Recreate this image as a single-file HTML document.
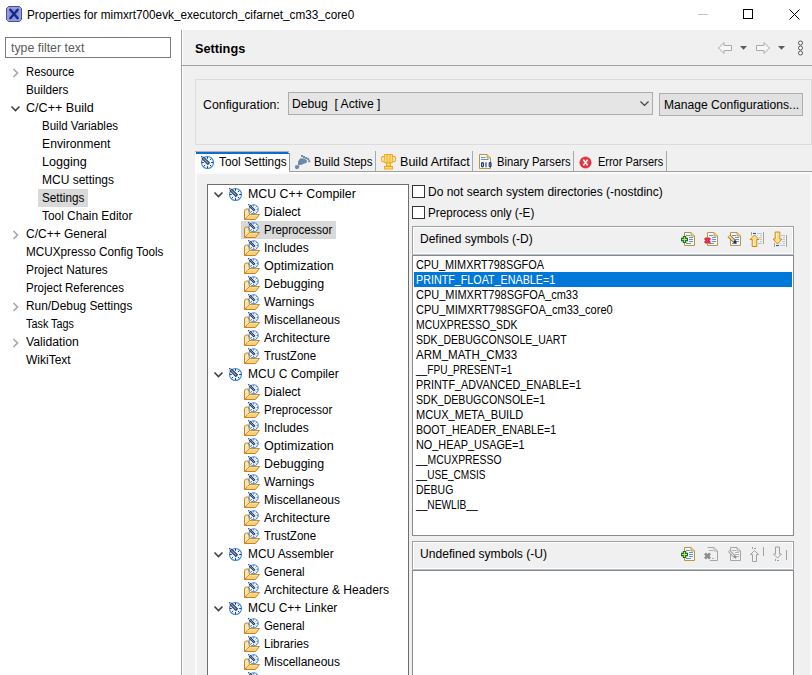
<!DOCTYPE html>
<html><head><meta charset="utf-8"><title>Properties</title>
<style>
html,body{margin:0;padding:0;}
body{width:812px;height:675px;position:relative;overflow:hidden;background:#fff;font-family:"Liberation Sans",sans-serif;}
.t{position:absolute;white-space:pre;transform-origin:0 0;}
.u{position:relative;top:-1px}
svg{overflow:visible}
</style></head><body>
<svg style="position:absolute;left:6px;top:6px" width="16" height="16" viewBox="0 0 16 16"><path d="M2.5 0.5 H13.5 L15.5 2.5 V13.5 L13.5 15.5 H2.5 L0.5 13.5 V2.5 Z" fill="#8a90d2" stroke="#3f52aa" stroke-width="1"/><rect x="2" y="2" width="12" height="12" fill="none" stroke="#a6a8e0" stroke-width="1"/><path d="M4.3 3.8 L11.7 12.2 M11.7 3.8 L4.3 12.2" stroke="#13288a" stroke-width="2.4" stroke-linecap="round"/></svg>
<div class="t" style="left:27.02px;top:9px;color:#000;font-size:12px;line-height:12px;font-weight:normal;transform:scaleX(0.9789);">Properties for mimxrt700evk<span class=u>_</span>executorch<span class=u>_</span>cifarnet<span class=u>_</span>cm33<span class=u>_</span>core0</div>
<div style="position:absolute;left:698px;top:14px;width:10px;height:1px;background:#c4c4c4"></div>
<div style="position:absolute;left:743px;top:9px;width:10px;height:10px;border:1px solid #000;box-sizing:border-box"></div>
<svg style="position:absolute;left:789px;top:9px" width="11" height="11" viewBox="0 0 11 11"><path d="M0.5 0.5 L10.5 10.5 M10.5 0.5 L0.5 10.5" stroke="#000" stroke-width="1"/></svg>
<div style="position:absolute;left:5px;top:37px;width:166px;height:21px;border:1px solid #7a7a7a;box-sizing:border-box;background:#fff"></div>
<div class="t" style="left:10.97px;top:42px;color:#5c5c5c;font-size:12px;line-height:12px;font-weight:normal;transform:scaleX(1.0290);">type filter text</div>
<svg style="position:absolute;left:12px;top:68px" width="8" height="10" viewBox="0 0 8 10"><path d="M1.5 1 L5.5 5 L1.5 9" fill="none" stroke="#a6a6a6" stroke-width="1.6"/></svg>
<div class="t" style="left:26.06px;top:66px;color:#000;font-size:12px;line-height:12px;font-weight:normal;transform:scaleX(0.9388);">Resource</div>
<div class="t" style="left:26.02px;top:84px;color:#000;font-size:12px;line-height:12px;font-weight:normal;transform:scaleX(0.9756);">Builders</div>
<svg style="position:absolute;left:10px;top:105px" width="11" height="8" viewBox="0 0 11 8"><path d="M1.5 1.5 L5.5 5.5 L9.5 1.5" fill="none" stroke="#404040" stroke-width="1.6"/></svg>
<div class="t" style="left:25.95px;top:102px;color:#000;font-size:12px;line-height:12px;font-weight:normal;transform:scaleX(1.0484);">C/C++ Build</div>
<div class="t" style="left:42.04px;top:120px;color:#000;font-size:12px;line-height:12px;font-weight:normal;transform:scaleX(0.9610);">Build Variables</div>
<div class="t" style="left:41.98px;top:138px;color:#000;font-size:12px;line-height:12px;font-weight:normal;transform:scaleX(1.0154);">Environment</div>
<div class="t" style="left:41.95px;top:156px;color:#000;font-size:12px;line-height:12px;font-weight:normal;transform:scaleX(1.0500);">Logging</div>
<div class="t" style="left:42.00px;top:174px;color:#000;font-size:12px;line-height:12px;font-weight:normal;">MCU settings</div>
<div style="position:absolute;left:38px;top:189px;width:50px;height:18px;background:#d9d9d9"></div>
<div class="t" style="left:42.02px;top:192px;color:#000;font-size:12px;line-height:12px;font-weight:normal;transform:scaleX(0.9756);">Settings</div>
<div class="t" style="left:42.00px;top:210px;color:#000;font-size:12px;line-height:12px;font-weight:normal;transform:scaleX(0.9889);">Tool Chain Editor</div>
<svg style="position:absolute;left:12px;top:230px" width="8" height="10" viewBox="0 0 8 10"><path d="M1.5 1 L5.5 5 L1.5 9" fill="none" stroke="#a6a6a6" stroke-width="1.6"/></svg>
<div class="t" style="left:26.00px;top:228px;color:#000;font-size:12px;line-height:12px;font-weight:normal;">C/C++ General</div>
<div class="t" style="left:26.02px;top:246px;color:#000;font-size:12px;line-height:12px;font-weight:normal;transform:scaleX(0.9783);">MCUXpresso Config Tools</div>
<div class="t" style="left:26.01px;top:264px;color:#000;font-size:12px;line-height:12px;font-weight:normal;transform:scaleX(0.9875);">Project Natures</div>
<div class="t" style="left:26.04px;top:282px;color:#000;font-size:12px;line-height:12px;font-weight:normal;transform:scaleX(0.9596);">Project References</div>
<svg style="position:absolute;left:12px;top:302px" width="8" height="10" viewBox="0 0 8 10"><path d="M1.5 1 L5.5 5 L1.5 9" fill="none" stroke="#a6a6a6" stroke-width="1.6"/></svg>
<div class="t" style="left:26.01px;top:300px;color:#000;font-size:12px;line-height:12px;font-weight:normal;transform:scaleX(0.9905);">Run/Debug Settings</div>
<div class="t" style="left:26.00px;top:318px;color:#000;font-size:12px;line-height:12px;font-weight:normal;transform:scaleX(0.9038);">Task Tags</div>
<svg style="position:absolute;left:12px;top:338px" width="8" height="10" viewBox="0 0 8 10"><path d="M1.5 1 L5.5 5 L1.5 9" fill="none" stroke="#a6a6a6" stroke-width="1.6"/></svg>
<div class="t" style="left:26.00px;top:336px;color:#000;font-size:12px;line-height:12px;font-weight:normal;transform:scaleX(1.0200);">Validation</div>
<div class="t" style="left:26.00px;top:354px;color:#000;font-size:12px;line-height:12px;font-weight:normal;">WikiText</div>
<div style="position:absolute;left:181px;top:30px;width:1px;height:645px;background:#a0a0a0"></div>
<div style="position:absolute;left:183px;top:30px;width:629px;height:645px;background:#f0f0f0"></div>
<div class="t" style="left:195.02px;top:42px;color:#000;font-size:13px;line-height:13px;font-weight:bold;transform:scaleX(0.9796);">Settings</div>
<svg style="position:absolute;left:718px;top:42px" width="15" height="13" viewBox="0 0 15 13"><path d="M0.5 6 L6 0.5 V3.5 H13.5 V8.5 H6 V11.5 Z" fill="#f6f6f6" stroke="#aaaaaa" stroke-width="1" stroke-linejoin="round"/></svg>
<svg style="position:absolute;left:740px;top:46px" width="8" height="5" viewBox="0 0 8 5"><path d="M0 0 H7 L3.5 3.8 Z" fill="#5a5a5a"/></svg>
<svg style="position:absolute;left:756px;top:42px" width="15" height="13" viewBox="0 0 15 13"><g transform="translate(14,0) scale(-1,1)"><path d="M0.5 6 L6 0.5 V3.5 H13.5 V8.5 H6 V11.5 Z" fill="#f6f6f6" stroke="#aaaaaa" stroke-width="1" stroke-linejoin="round"/></g></svg>
<svg style="position:absolute;left:778px;top:46px" width="8" height="5" viewBox="0 0 8 5"><path d="M0 0 H7 L3.5 3.8 Z" fill="#5a5a5a"/></svg>
<svg style="position:absolute;left:797px;top:40px" width="7" height="16" viewBox="0 0 7 16"><circle cx="3.5" cy="3" r="2" fill="#fff" stroke="#555"/><circle cx="3.5" cy="8" r="2" fill="#fff" stroke="#555"/><circle cx="3.5" cy="13" r="2" fill="#fff" stroke="#555"/></svg>
<div style="position:absolute;left:182px;top:65px;width:630px;height:1px;background:#a0a0a0"></div>
<div style="position:absolute;left:195px;top:79px;width:617px;height:66px;border:1px solid #dcdcdc;box-sizing:border-box"></div>
<div class="t" style="left:202.97px;top:99px;color:#000;font-size:12px;line-height:12px;font-weight:normal;transform:scaleX(1.0278);">Configuration:</div>
<div style="position:absolute;left:288px;top:92px;width:365px;height:23px;border:1px solid #adadad;box-sizing:border-box;background:#e5e5e5"></div>
<div class="t" style="left:291.99px;top:98px;color:#000;font-size:12px;line-height:12px;font-weight:normal;transform:scaleX(1.0119);">Debug  [ Active ]</div>
<svg style="position:absolute;left:640px;top:101px" width="9" height="6" viewBox="0 0 9 6"><path d="M0.5 0.5 L4.5 4.5 L8.5 0.5" fill="none" stroke="#404040" stroke-width="1.2"/></svg>
<div style="position:absolute;left:659px;top:93px;width:144px;height:23px;border:1px solid #adadad;box-sizing:border-box;background:#e1e1e1"></div>
<div class="t" style="left:663.99px;top:99px;color:#000;font-size:12px;line-height:12px;font-weight:normal;transform:scaleX(1.0076);">Manage Configurations...</div>
<div style="position:absolute;left:289px;top:171px;width:523px;height:1px;background:#a0a0a0"></div>
<div style="position:absolute;left:195px;top:172px;width:617px;height:2px;background:#fbfbfb"></div>
<div style="position:absolute;left:195px;top:151px;width:2px;height:524px;background:#fbfbfb"></div>
<div style="position:absolute;left:810px;top:172px;width:2px;height:503px;background:#fbfbfb"></div>
<div style="position:absolute;left:195px;top:151px;width:94px;height:21px;background:#fff;border-top:1px solid #b8b0a8;box-sizing:border-box"></div>
<div style="position:absolute;left:289px;top:153px;width:1px;height:19px;background:#9a9a9a"></div>
<div style="position:absolute;left:288px;top:152px;width:1px;height:1px;background:#c8c8c8"></div>
<div style="position:absolute;left:196px;top:152px;width:92px;height:2px;background:#0a6ed0"></div>
<div style="position:absolute;left:288px;top:153px;width:1px;height:1px;background:#0a6ed0"></div>
<div style="position:absolute;left:375px;top:151px;width:1px;height:20px;background:#a8a8a8"></div>
<div style="position:absolute;left:472px;top:151px;width:1px;height:20px;background:#a8a8a8"></div>
<div style="position:absolute;left:573px;top:151px;width:1px;height:20px;background:#a8a8a8"></div>
<div style="position:absolute;left:666px;top:151px;width:1px;height:20px;background:#a8a8a8"></div>
<div class="t" style="left:219.00px;top:156px;color:#000;font-size:12px;line-height:12px;font-weight:normal;transform:scaleX(0.9851);">Tool Settings</div>
<div class="t" style="left:314.03px;top:156px;color:#000;font-size:12px;line-height:12px;font-weight:normal;transform:scaleX(0.9655);">Build Steps</div>
<div class="t" style="left:399.95px;top:156px;color:#000;font-size:12px;line-height:12px;font-weight:normal;transform:scaleX(1.0469);">Build Artifact</div>
<div class="t" style="left:497.07px;top:156px;color:#000;font-size:12px;line-height:12px;font-weight:normal;transform:scaleX(0.9342);">Binary Parsers</div>
<div class="t" style="left:598.09px;top:156px;color:#000;font-size:12px;line-height:12px;font-weight:normal;transform:scaleX(0.9130);">Error Parsers</div>
<svg style="position:absolute;left:201px;top:156px" width="13" height="13" viewBox="0 0 13 13"><circle cx="6.5" cy="6.5" r="6" fill="#f2f7fd" stroke="#3f8ad4" stroke-width="1.1"/><path d="M6.5 0.8 V2.8 M12.2 6.5 H10.2 M6.5 12.2 V10.2 M0.8 6.5 H2.8 M2.7800000000000002 10.219999999999999 l1.3 -1.3 M10.219999999999999 10.219999999999999 l-1.3 -1.3 M10.219999999999999 2.7800000000000002 l-1.3 1.3" stroke="#1d3d82" stroke-width="1"/><path d="M1.6 1.6 L8 8" stroke="#1d3d82" stroke-width="3.3"/><path d="M2.5 2.5 L7.2 7.2" stroke="#f7e58c" stroke-width="1.1" stroke-dasharray="0.8 0.6"/><circle cx="0.8" cy="0.8" r="0.8" fill="#1d2a5a"/></svg>
<svg style="position:absolute;left:292px;top:153px" width="20" height="20" viewBox="0 0 20 20"><g fill="#6b8aa6"><path d="M3.2 12.6 L6.2 12 L7.2 13.2 L6.8 15.6 L4.2 16.2 L3 14.8 Z"/><path d="M8.3 5.3 L12.4 5.5 L14.8 7.2 L14.8 9.8 L11.9 10.8 L8.9 11.9 L6 11.9 L6 8.5 Z"/><rect x="9" y="2" width="2" height="2"/><rect x="11" y="3" width="2" height="2"/><rect x="13.2" y="4" width="2" height="2"/><rect x="15.2" y="5" width="2" height="2"/><rect x="16.2" y="7.2" width="2" height="2"/></g></svg>
<svg style="position:absolute;left:379px;top:153px" width="20" height="20" viewBox="0 0 20 20"><path d="M5.5 1.5 H13.5 L14 9 Q13 9.8 12 9.8 H7 Q6 9.8 5 9 Z" fill="#f9dc78" stroke="#f0a81e" stroke-width="1"/><path d="M5.2 3.5 H3.5 L2.5 4.5 V7.5 L3.5 8.8 H5.3 M13.8 3.5 H15.5 L16.5 4.5 V7.5 L15.5 8.8 H13.7" fill="none" stroke="#f0a81e" stroke-width="1.1"/><path d="M8 2 V9.5 M11 2 V9.5" stroke="#f0a81e" stroke-width="0.9"/><rect x="7.5" y="10" width="4" height="3" fill="#f9dc78" stroke="#f0a81e" stroke-width="1"/><rect x="5.5" y="13.5" width="8" height="2.5" fill="#f9dc78" stroke="#f0a81e" stroke-width="1"/></svg>
<svg style="position:absolute;left:475px;top:153px" width="20" height="20" viewBox="0 0 20 20"><path d="M4.5 1.5 H12 L15.5 5 V15.5 H4.5 Z" fill="#f4f8fe" stroke="#b8983a" stroke-width="1"/><path d="M12 1.5 V5 H15.5" fill="#e8c868" stroke="#b8983a" stroke-width="0.8"/><path d="M6 4.5 H10.5 M6 6.5 H13.5" stroke="#5f82bf" stroke-width="0.9"/><g fill="none" stroke="#17316e" stroke-width="1.1"><rect x="6.6" y="9.6" width="1.8" height="4.3" rx="0.9"/><path d="M11 9.2 V14.2"/><rect x="14.2" y="9.6" width="1.8" height="4.3" rx="0.9"/></g></svg>
<svg style="position:absolute;left:577px;top:153px" width="20" height="20" viewBox="0 0 20 20"><circle cx="8.5" cy="9.5" r="5.6" fill="#e4303c" stroke="#d01a28" stroke-width="0.6"/><circle cx="8.5" cy="9.5" r="3.5" fill="#ec5a64" opacity="0.5"/><path d="M6.3 6.6 L10.7 12.4 M10.7 6.6 L6.3 12.4" stroke="#fff" stroke-width="1.5"/></svg>
<div style="position:absolute;left:207px;top:184px;width:202px;height:491px;border:1px solid #6e6e6e;border-bottom:none;box-sizing:border-box;background:#fff"></div>
<svg style="position:absolute;left:213px;top:191px" width="11" height="8" viewBox="0 0 11 8"><path d="M1.5 1.5 L5.5 5.5 L9.5 1.5" fill="none" stroke="#404040" stroke-width="1.6"/></svg>
<svg style="position:absolute;left:229px;top:188px" width="13" height="13" viewBox="0 0 13 13"><circle cx="6.5" cy="6.5" r="6" fill="#f2f7fd" stroke="#3f8ad4" stroke-width="1.1"/><path d="M6.5 0.8 V2.8 M12.2 6.5 H10.2 M6.5 12.2 V10.2 M0.8 6.5 H2.8 M2.7800000000000002 10.219999999999999 l1.3 -1.3 M10.219999999999999 10.219999999999999 l-1.3 -1.3 M10.219999999999999 2.7800000000000002 l-1.3 1.3" stroke="#1d3d82" stroke-width="1"/><path d="M1.6 1.6 L8 8" stroke="#1d3d82" stroke-width="3.3"/><path d="M2.5 2.5 L7.2 7.2" stroke="#f7e58c" stroke-width="1.1" stroke-dasharray="0.8 0.6"/><circle cx="0.8" cy="0.8" r="0.8" fill="#1d2a5a"/></svg>
<div class="t" style="left:247.97px;top:188px;color:#000;font-size:12px;line-height:12px;font-weight:normal;transform:scaleX(1.0294);">MCU C++ Compiler</div>
<svg style="position:absolute;left:241px;top:202px" width="20" height="20" viewBox="0 0 20 20"><path d="M3.5 17.5 V9 Q3.5 7 5.5 7 H7.5 L8.5 12.5 L4 17.5 Z" fill="#fae6b4" stroke="#c9831f" stroke-width="1"/><path d="M8.5 12.5 H18.5 L14.5 17.5 H3.8 Z" fill="#f6d07a" stroke="#c9831f" stroke-width="1" stroke-linejoin="round"/><path d="M6 15.6 L9 13.3 L16.8 13.3" stroke="#fbe6b0" stroke-width="0.8" fill="none"/><circle cx="12.7" cy="7.3" r="4.6" fill="#fbfdff" stroke="#3f8ad4" stroke-width="1"/><path d="M12.7 3.2 V4.4 M16.8 7.3 H15.6 M12.7 11.4 V10.2 M9.9 10.1 l0.8 -0.8 M15.5 10.1 l-0.8 -0.8 M15.5 4.5 l-0.8 0.8" stroke="#1d3d82" stroke-width="0.9"/><path d="M8.6 3.6 L13.6 8.6" stroke="#1d3d82" stroke-width="2.4"/><path d="M9.2 4.2 L13 8" stroke="#f7e58c" stroke-width="0.9" stroke-dasharray="0.8 0.6"/><circle cx="7.8" cy="2.8" r="0.7" fill="#1d2a5a"/></svg>
<div class="t" style="left:264.00px;top:206px;color:#000;font-size:12px;line-height:12px;font-weight:normal;">Dialect</div>
<div style="position:absolute;left:241px;top:221px;width:95px;height:18px;background:#d9d9d9"></div>
<svg style="position:absolute;left:241px;top:220px" width="20" height="20" viewBox="0 0 20 20"><path d="M3.5 17.5 V9 Q3.5 7 5.5 7 H7.5 L8.5 12.5 L4 17.5 Z" fill="#fae6b4" stroke="#c9831f" stroke-width="1"/><path d="M8.5 12.5 H18.5 L14.5 17.5 H3.8 Z" fill="#f6d07a" stroke="#c9831f" stroke-width="1" stroke-linejoin="round"/><path d="M6 15.6 L9 13.3 L16.8 13.3" stroke="#fbe6b0" stroke-width="0.8" fill="none"/><circle cx="12.7" cy="7.3" r="4.6" fill="#fbfdff" stroke="#3f8ad4" stroke-width="1"/><path d="M12.7 3.2 V4.4 M16.8 7.3 H15.6 M12.7 11.4 V10.2 M9.9 10.1 l0.8 -0.8 M15.5 10.1 l-0.8 -0.8 M15.5 4.5 l-0.8 0.8" stroke="#1d3d82" stroke-width="0.9"/><path d="M8.6 3.6 L13.6 8.6" stroke="#1d3d82" stroke-width="2.4"/><path d="M9.2 4.2 L13 8" stroke="#f7e58c" stroke-width="0.9" stroke-dasharray="0.8 0.6"/><circle cx="7.8" cy="2.8" r="0.7" fill="#1d2a5a"/></svg>
<div class="t" style="left:264.04px;top:224px;color:#000;font-size:12px;line-height:12px;font-weight:normal;transform:scaleX(0.9565);">Preprocessor</div>
<svg style="position:absolute;left:241px;top:238px" width="20" height="20" viewBox="0 0 20 20"><path d="M3.5 17.5 V9 Q3.5 7 5.5 7 H7.5 L8.5 12.5 L4 17.5 Z" fill="#fae6b4" stroke="#c9831f" stroke-width="1"/><path d="M8.5 12.5 H18.5 L14.5 17.5 H3.8 Z" fill="#f6d07a" stroke="#c9831f" stroke-width="1" stroke-linejoin="round"/><path d="M6 15.6 L9 13.3 L16.8 13.3" stroke="#fbe6b0" stroke-width="0.8" fill="none"/><circle cx="12.7" cy="7.3" r="4.6" fill="#fbfdff" stroke="#3f8ad4" stroke-width="1"/><path d="M12.7 3.2 V4.4 M16.8 7.3 H15.6 M12.7 11.4 V10.2 M9.9 10.1 l0.8 -0.8 M15.5 10.1 l-0.8 -0.8 M15.5 4.5 l-0.8 0.8" stroke="#1d3d82" stroke-width="0.9"/><path d="M8.6 3.6 L13.6 8.6" stroke="#1d3d82" stroke-width="2.4"/><path d="M9.2 4.2 L13 8" stroke="#f7e58c" stroke-width="0.9" stroke-dasharray="0.8 0.6"/><circle cx="7.8" cy="2.8" r="0.7" fill="#1d2a5a"/></svg>
<div class="t" style="left:264.00px;top:242px;color:#000;font-size:12px;line-height:12px;font-weight:normal;">Includes</div>
<svg style="position:absolute;left:241px;top:256px" width="20" height="20" viewBox="0 0 20 20"><path d="M3.5 17.5 V9 Q3.5 7 5.5 7 H7.5 L8.5 12.5 L4 17.5 Z" fill="#fae6b4" stroke="#c9831f" stroke-width="1"/><path d="M8.5 12.5 H18.5 L14.5 17.5 H3.8 Z" fill="#f6d07a" stroke="#c9831f" stroke-width="1" stroke-linejoin="round"/><path d="M6 15.6 L9 13.3 L16.8 13.3" stroke="#fbe6b0" stroke-width="0.8" fill="none"/><circle cx="12.7" cy="7.3" r="4.6" fill="#fbfdff" stroke="#3f8ad4" stroke-width="1"/><path d="M12.7 3.2 V4.4 M16.8 7.3 H15.6 M12.7 11.4 V10.2 M9.9 10.1 l0.8 -0.8 M15.5 10.1 l-0.8 -0.8 M15.5 4.5 l-0.8 0.8" stroke="#1d3d82" stroke-width="0.9"/><path d="M8.6 3.6 L13.6 8.6" stroke="#1d3d82" stroke-width="2.4"/><path d="M9.2 4.2 L13 8" stroke="#f7e58c" stroke-width="0.9" stroke-dasharray="0.8 0.6"/><circle cx="7.8" cy="2.8" r="0.7" fill="#1d2a5a"/></svg>
<div class="t" style="left:263.95px;top:260px;color:#000;font-size:12px;line-height:12px;font-weight:normal;transform:scaleX(1.0469);">Optimization</div>
<svg style="position:absolute;left:241px;top:274px" width="20" height="20" viewBox="0 0 20 20"><path d="M3.5 17.5 V9 Q3.5 7 5.5 7 H7.5 L8.5 12.5 L4 17.5 Z" fill="#fae6b4" stroke="#c9831f" stroke-width="1"/><path d="M8.5 12.5 H18.5 L14.5 17.5 H3.8 Z" fill="#f6d07a" stroke="#c9831f" stroke-width="1" stroke-linejoin="round"/><path d="M6 15.6 L9 13.3 L16.8 13.3" stroke="#fbe6b0" stroke-width="0.8" fill="none"/><circle cx="12.7" cy="7.3" r="4.6" fill="#fbfdff" stroke="#3f8ad4" stroke-width="1"/><path d="M12.7 3.2 V4.4 M16.8 7.3 H15.6 M12.7 11.4 V10.2 M9.9 10.1 l0.8 -0.8 M15.5 10.1 l-0.8 -0.8 M15.5 4.5 l-0.8 0.8" stroke="#1d3d82" stroke-width="0.9"/><path d="M8.6 3.6 L13.6 8.6" stroke="#1d3d82" stroke-width="2.4"/><path d="M9.2 4.2 L13 8" stroke="#f7e58c" stroke-width="0.9" stroke-dasharray="0.8 0.6"/><circle cx="7.8" cy="2.8" r="0.7" fill="#1d2a5a"/></svg>
<div class="t" style="left:263.96px;top:278px;color:#000;font-size:12px;line-height:12px;font-weight:normal;transform:scaleX(1.0364);">Debugging</div>
<svg style="position:absolute;left:241px;top:292px" width="20" height="20" viewBox="0 0 20 20"><path d="M3.5 17.5 V9 Q3.5 7 5.5 7 H7.5 L8.5 12.5 L4 17.5 Z" fill="#fae6b4" stroke="#c9831f" stroke-width="1"/><path d="M8.5 12.5 H18.5 L14.5 17.5 H3.8 Z" fill="#f6d07a" stroke="#c9831f" stroke-width="1" stroke-linejoin="round"/><path d="M6 15.6 L9 13.3 L16.8 13.3" stroke="#fbe6b0" stroke-width="0.8" fill="none"/><circle cx="12.7" cy="7.3" r="4.6" fill="#fbfdff" stroke="#3f8ad4" stroke-width="1"/><path d="M12.7 3.2 V4.4 M16.8 7.3 H15.6 M12.7 11.4 V10.2 M9.9 10.1 l0.8 -0.8 M15.5 10.1 l-0.8 -0.8 M15.5 4.5 l-0.8 0.8" stroke="#1d3d82" stroke-width="0.9"/><path d="M8.6 3.6 L13.6 8.6" stroke="#1d3d82" stroke-width="2.4"/><path d="M9.2 4.2 L13 8" stroke="#f7e58c" stroke-width="0.9" stroke-dasharray="0.8 0.6"/><circle cx="7.8" cy="2.8" r="0.7" fill="#1d2a5a"/></svg>
<div class="t" style="left:264.00px;top:296px;color:#000;font-size:12px;line-height:12px;font-weight:normal;">Warnings</div>
<svg style="position:absolute;left:241px;top:310px" width="20" height="20" viewBox="0 0 20 20"><path d="M3.5 17.5 V9 Q3.5 7 5.5 7 H7.5 L8.5 12.5 L4 17.5 Z" fill="#fae6b4" stroke="#c9831f" stroke-width="1"/><path d="M8.5 12.5 H18.5 L14.5 17.5 H3.8 Z" fill="#f6d07a" stroke="#c9831f" stroke-width="1" stroke-linejoin="round"/><path d="M6 15.6 L9 13.3 L16.8 13.3" stroke="#fbe6b0" stroke-width="0.8" fill="none"/><circle cx="12.7" cy="7.3" r="4.6" fill="#fbfdff" stroke="#3f8ad4" stroke-width="1"/><path d="M12.7 3.2 V4.4 M16.8 7.3 H15.6 M12.7 11.4 V10.2 M9.9 10.1 l0.8 -0.8 M15.5 10.1 l-0.8 -0.8 M15.5 4.5 l-0.8 0.8" stroke="#1d3d82" stroke-width="0.9"/><path d="M8.6 3.6 L13.6 8.6" stroke="#1d3d82" stroke-width="2.4"/><path d="M9.2 4.2 L13 8" stroke="#f7e58c" stroke-width="0.9" stroke-dasharray="0.8 0.6"/><circle cx="7.8" cy="2.8" r="0.7" fill="#1d2a5a"/></svg>
<div class="t" style="left:264.00px;top:314px;color:#000;font-size:12px;line-height:12px;font-weight:normal;">Miscellaneous</div>
<svg style="position:absolute;left:241px;top:328px" width="20" height="20" viewBox="0 0 20 20"><path d="M3.5 17.5 V9 Q3.5 7 5.5 7 H7.5 L8.5 12.5 L4 17.5 Z" fill="#fae6b4" stroke="#c9831f" stroke-width="1"/><path d="M8.5 12.5 H18.5 L14.5 17.5 H3.8 Z" fill="#f6d07a" stroke="#c9831f" stroke-width="1" stroke-linejoin="round"/><path d="M6 15.6 L9 13.3 L16.8 13.3" stroke="#fbe6b0" stroke-width="0.8" fill="none"/><circle cx="12.7" cy="7.3" r="4.6" fill="#fbfdff" stroke="#3f8ad4" stroke-width="1"/><path d="M12.7 3.2 V4.4 M16.8 7.3 H15.6 M12.7 11.4 V10.2 M9.9 10.1 l0.8 -0.8 M15.5 10.1 l-0.8 -0.8 M15.5 4.5 l-0.8 0.8" stroke="#1d3d82" stroke-width="0.9"/><path d="M8.6 3.6 L13.6 8.6" stroke="#1d3d82" stroke-width="2.4"/><path d="M9.2 4.2 L13 8" stroke="#f7e58c" stroke-width="0.9" stroke-dasharray="0.8 0.6"/><circle cx="7.8" cy="2.8" r="0.7" fill="#1d2a5a"/></svg>
<div class="t" style="left:264.00px;top:332px;color:#000;font-size:12px;line-height:12px;font-weight:normal;transform:scaleX(1.0323);">Architecture</div>
<svg style="position:absolute;left:241px;top:346px" width="20" height="20" viewBox="0 0 20 20"><path d="M3.5 17.5 V9 Q3.5 7 5.5 7 H7.5 L8.5 12.5 L4 17.5 Z" fill="#fae6b4" stroke="#c9831f" stroke-width="1"/><path d="M8.5 12.5 H18.5 L14.5 17.5 H3.8 Z" fill="#f6d07a" stroke="#c9831f" stroke-width="1" stroke-linejoin="round"/><path d="M6 15.6 L9 13.3 L16.8 13.3" stroke="#fbe6b0" stroke-width="0.8" fill="none"/><circle cx="12.7" cy="7.3" r="4.6" fill="#fbfdff" stroke="#3f8ad4" stroke-width="1"/><path d="M12.7 3.2 V4.4 M16.8 7.3 H15.6 M12.7 11.4 V10.2 M9.9 10.1 l0.8 -0.8 M15.5 10.1 l-0.8 -0.8 M15.5 4.5 l-0.8 0.8" stroke="#1d3d82" stroke-width="0.9"/><path d="M8.6 3.6 L13.6 8.6" stroke="#1d3d82" stroke-width="2.4"/><path d="M9.2 4.2 L13 8" stroke="#f7e58c" stroke-width="0.9" stroke-dasharray="0.8 0.6"/><circle cx="7.8" cy="2.8" r="0.7" fill="#1d2a5a"/></svg>
<div class="t" style="left:264.00px;top:350px;color:#000;font-size:12px;line-height:12px;font-weight:normal;transform:scaleX(0.9623);">TrustZone</div>
<svg style="position:absolute;left:213px;top:371px" width="11" height="8" viewBox="0 0 11 8"><path d="M1.5 1.5 L5.5 5.5 L9.5 1.5" fill="none" stroke="#404040" stroke-width="1.6"/></svg>
<svg style="position:absolute;left:229px;top:368px" width="13" height="13" viewBox="0 0 13 13"><circle cx="6.5" cy="6.5" r="6" fill="#f2f7fd" stroke="#3f8ad4" stroke-width="1.1"/><path d="M6.5 0.8 V2.8 M12.2 6.5 H10.2 M6.5 12.2 V10.2 M0.8 6.5 H2.8 M2.7800000000000002 10.219999999999999 l1.3 -1.3 M10.219999999999999 10.219999999999999 l-1.3 -1.3 M10.219999999999999 2.7800000000000002 l-1.3 1.3" stroke="#1d3d82" stroke-width="1"/><path d="M1.6 1.6 L8 8" stroke="#1d3d82" stroke-width="3.3"/><path d="M2.5 2.5 L7.2 7.2" stroke="#f7e58c" stroke-width="1.1" stroke-dasharray="0.8 0.6"/><circle cx="0.8" cy="0.8" r="0.8" fill="#1d2a5a"/></svg>
<div class="t" style="left:248.00px;top:368px;color:#000;font-size:12px;line-height:12px;font-weight:normal;">MCU C Compiler</div>
<svg style="position:absolute;left:241px;top:382px" width="20" height="20" viewBox="0 0 20 20"><path d="M3.5 17.5 V9 Q3.5 7 5.5 7 H7.5 L8.5 12.5 L4 17.5 Z" fill="#fae6b4" stroke="#c9831f" stroke-width="1"/><path d="M8.5 12.5 H18.5 L14.5 17.5 H3.8 Z" fill="#f6d07a" stroke="#c9831f" stroke-width="1" stroke-linejoin="round"/><path d="M6 15.6 L9 13.3 L16.8 13.3" stroke="#fbe6b0" stroke-width="0.8" fill="none"/><circle cx="12.7" cy="7.3" r="4.6" fill="#fbfdff" stroke="#3f8ad4" stroke-width="1"/><path d="M12.7 3.2 V4.4 M16.8 7.3 H15.6 M12.7 11.4 V10.2 M9.9 10.1 l0.8 -0.8 M15.5 10.1 l-0.8 -0.8 M15.5 4.5 l-0.8 0.8" stroke="#1d3d82" stroke-width="0.9"/><path d="M8.6 3.6 L13.6 8.6" stroke="#1d3d82" stroke-width="2.4"/><path d="M9.2 4.2 L13 8" stroke="#f7e58c" stroke-width="0.9" stroke-dasharray="0.8 0.6"/><circle cx="7.8" cy="2.8" r="0.7" fill="#1d2a5a"/></svg>
<div class="t" style="left:264.00px;top:386px;color:#000;font-size:12px;line-height:12px;font-weight:normal;">Dialect</div>
<svg style="position:absolute;left:241px;top:400px" width="20" height="20" viewBox="0 0 20 20"><path d="M3.5 17.5 V9 Q3.5 7 5.5 7 H7.5 L8.5 12.5 L4 17.5 Z" fill="#fae6b4" stroke="#c9831f" stroke-width="1"/><path d="M8.5 12.5 H18.5 L14.5 17.5 H3.8 Z" fill="#f6d07a" stroke="#c9831f" stroke-width="1" stroke-linejoin="round"/><path d="M6 15.6 L9 13.3 L16.8 13.3" stroke="#fbe6b0" stroke-width="0.8" fill="none"/><circle cx="12.7" cy="7.3" r="4.6" fill="#fbfdff" stroke="#3f8ad4" stroke-width="1"/><path d="M12.7 3.2 V4.4 M16.8 7.3 H15.6 M12.7 11.4 V10.2 M9.9 10.1 l0.8 -0.8 M15.5 10.1 l-0.8 -0.8 M15.5 4.5 l-0.8 0.8" stroke="#1d3d82" stroke-width="0.9"/><path d="M8.6 3.6 L13.6 8.6" stroke="#1d3d82" stroke-width="2.4"/><path d="M9.2 4.2 L13 8" stroke="#f7e58c" stroke-width="0.9" stroke-dasharray="0.8 0.6"/><circle cx="7.8" cy="2.8" r="0.7" fill="#1d2a5a"/></svg>
<div class="t" style="left:264.04px;top:404px;color:#000;font-size:12px;line-height:12px;font-weight:normal;transform:scaleX(0.9565);">Preprocessor</div>
<svg style="position:absolute;left:241px;top:418px" width="20" height="20" viewBox="0 0 20 20"><path d="M3.5 17.5 V9 Q3.5 7 5.5 7 H7.5 L8.5 12.5 L4 17.5 Z" fill="#fae6b4" stroke="#c9831f" stroke-width="1"/><path d="M8.5 12.5 H18.5 L14.5 17.5 H3.8 Z" fill="#f6d07a" stroke="#c9831f" stroke-width="1" stroke-linejoin="round"/><path d="M6 15.6 L9 13.3 L16.8 13.3" stroke="#fbe6b0" stroke-width="0.8" fill="none"/><circle cx="12.7" cy="7.3" r="4.6" fill="#fbfdff" stroke="#3f8ad4" stroke-width="1"/><path d="M12.7 3.2 V4.4 M16.8 7.3 H15.6 M12.7 11.4 V10.2 M9.9 10.1 l0.8 -0.8 M15.5 10.1 l-0.8 -0.8 M15.5 4.5 l-0.8 0.8" stroke="#1d3d82" stroke-width="0.9"/><path d="M8.6 3.6 L13.6 8.6" stroke="#1d3d82" stroke-width="2.4"/><path d="M9.2 4.2 L13 8" stroke="#f7e58c" stroke-width="0.9" stroke-dasharray="0.8 0.6"/><circle cx="7.8" cy="2.8" r="0.7" fill="#1d2a5a"/></svg>
<div class="t" style="left:264.00px;top:422px;color:#000;font-size:12px;line-height:12px;font-weight:normal;">Includes</div>
<svg style="position:absolute;left:241px;top:436px" width="20" height="20" viewBox="0 0 20 20"><path d="M3.5 17.5 V9 Q3.5 7 5.5 7 H7.5 L8.5 12.5 L4 17.5 Z" fill="#fae6b4" stroke="#c9831f" stroke-width="1"/><path d="M8.5 12.5 H18.5 L14.5 17.5 H3.8 Z" fill="#f6d07a" stroke="#c9831f" stroke-width="1" stroke-linejoin="round"/><path d="M6 15.6 L9 13.3 L16.8 13.3" stroke="#fbe6b0" stroke-width="0.8" fill="none"/><circle cx="12.7" cy="7.3" r="4.6" fill="#fbfdff" stroke="#3f8ad4" stroke-width="1"/><path d="M12.7 3.2 V4.4 M16.8 7.3 H15.6 M12.7 11.4 V10.2 M9.9 10.1 l0.8 -0.8 M15.5 10.1 l-0.8 -0.8 M15.5 4.5 l-0.8 0.8" stroke="#1d3d82" stroke-width="0.9"/><path d="M8.6 3.6 L13.6 8.6" stroke="#1d3d82" stroke-width="2.4"/><path d="M9.2 4.2 L13 8" stroke="#f7e58c" stroke-width="0.9" stroke-dasharray="0.8 0.6"/><circle cx="7.8" cy="2.8" r="0.7" fill="#1d2a5a"/></svg>
<div class="t" style="left:263.95px;top:440px;color:#000;font-size:12px;line-height:12px;font-weight:normal;transform:scaleX(1.0469);">Optimization</div>
<svg style="position:absolute;left:241px;top:454px" width="20" height="20" viewBox="0 0 20 20"><path d="M3.5 17.5 V9 Q3.5 7 5.5 7 H7.5 L8.5 12.5 L4 17.5 Z" fill="#fae6b4" stroke="#c9831f" stroke-width="1"/><path d="M8.5 12.5 H18.5 L14.5 17.5 H3.8 Z" fill="#f6d07a" stroke="#c9831f" stroke-width="1" stroke-linejoin="round"/><path d="M6 15.6 L9 13.3 L16.8 13.3" stroke="#fbe6b0" stroke-width="0.8" fill="none"/><circle cx="12.7" cy="7.3" r="4.6" fill="#fbfdff" stroke="#3f8ad4" stroke-width="1"/><path d="M12.7 3.2 V4.4 M16.8 7.3 H15.6 M12.7 11.4 V10.2 M9.9 10.1 l0.8 -0.8 M15.5 10.1 l-0.8 -0.8 M15.5 4.5 l-0.8 0.8" stroke="#1d3d82" stroke-width="0.9"/><path d="M8.6 3.6 L13.6 8.6" stroke="#1d3d82" stroke-width="2.4"/><path d="M9.2 4.2 L13 8" stroke="#f7e58c" stroke-width="0.9" stroke-dasharray="0.8 0.6"/><circle cx="7.8" cy="2.8" r="0.7" fill="#1d2a5a"/></svg>
<div class="t" style="left:263.96px;top:458px;color:#000;font-size:12px;line-height:12px;font-weight:normal;transform:scaleX(1.0364);">Debugging</div>
<svg style="position:absolute;left:241px;top:472px" width="20" height="20" viewBox="0 0 20 20"><path d="M3.5 17.5 V9 Q3.5 7 5.5 7 H7.5 L8.5 12.5 L4 17.5 Z" fill="#fae6b4" stroke="#c9831f" stroke-width="1"/><path d="M8.5 12.5 H18.5 L14.5 17.5 H3.8 Z" fill="#f6d07a" stroke="#c9831f" stroke-width="1" stroke-linejoin="round"/><path d="M6 15.6 L9 13.3 L16.8 13.3" stroke="#fbe6b0" stroke-width="0.8" fill="none"/><circle cx="12.7" cy="7.3" r="4.6" fill="#fbfdff" stroke="#3f8ad4" stroke-width="1"/><path d="M12.7 3.2 V4.4 M16.8 7.3 H15.6 M12.7 11.4 V10.2 M9.9 10.1 l0.8 -0.8 M15.5 10.1 l-0.8 -0.8 M15.5 4.5 l-0.8 0.8" stroke="#1d3d82" stroke-width="0.9"/><path d="M8.6 3.6 L13.6 8.6" stroke="#1d3d82" stroke-width="2.4"/><path d="M9.2 4.2 L13 8" stroke="#f7e58c" stroke-width="0.9" stroke-dasharray="0.8 0.6"/><circle cx="7.8" cy="2.8" r="0.7" fill="#1d2a5a"/></svg>
<div class="t" style="left:264.00px;top:476px;color:#000;font-size:12px;line-height:12px;font-weight:normal;">Warnings</div>
<svg style="position:absolute;left:241px;top:490px" width="20" height="20" viewBox="0 0 20 20"><path d="M3.5 17.5 V9 Q3.5 7 5.5 7 H7.5 L8.5 12.5 L4 17.5 Z" fill="#fae6b4" stroke="#c9831f" stroke-width="1"/><path d="M8.5 12.5 H18.5 L14.5 17.5 H3.8 Z" fill="#f6d07a" stroke="#c9831f" stroke-width="1" stroke-linejoin="round"/><path d="M6 15.6 L9 13.3 L16.8 13.3" stroke="#fbe6b0" stroke-width="0.8" fill="none"/><circle cx="12.7" cy="7.3" r="4.6" fill="#fbfdff" stroke="#3f8ad4" stroke-width="1"/><path d="M12.7 3.2 V4.4 M16.8 7.3 H15.6 M12.7 11.4 V10.2 M9.9 10.1 l0.8 -0.8 M15.5 10.1 l-0.8 -0.8 M15.5 4.5 l-0.8 0.8" stroke="#1d3d82" stroke-width="0.9"/><path d="M8.6 3.6 L13.6 8.6" stroke="#1d3d82" stroke-width="2.4"/><path d="M9.2 4.2 L13 8" stroke="#f7e58c" stroke-width="0.9" stroke-dasharray="0.8 0.6"/><circle cx="7.8" cy="2.8" r="0.7" fill="#1d2a5a"/></svg>
<div class="t" style="left:264.00px;top:494px;color:#000;font-size:12px;line-height:12px;font-weight:normal;">Miscellaneous</div>
<svg style="position:absolute;left:241px;top:508px" width="20" height="20" viewBox="0 0 20 20"><path d="M3.5 17.5 V9 Q3.5 7 5.5 7 H7.5 L8.5 12.5 L4 17.5 Z" fill="#fae6b4" stroke="#c9831f" stroke-width="1"/><path d="M8.5 12.5 H18.5 L14.5 17.5 H3.8 Z" fill="#f6d07a" stroke="#c9831f" stroke-width="1" stroke-linejoin="round"/><path d="M6 15.6 L9 13.3 L16.8 13.3" stroke="#fbe6b0" stroke-width="0.8" fill="none"/><circle cx="12.7" cy="7.3" r="4.6" fill="#fbfdff" stroke="#3f8ad4" stroke-width="1"/><path d="M12.7 3.2 V4.4 M16.8 7.3 H15.6 M12.7 11.4 V10.2 M9.9 10.1 l0.8 -0.8 M15.5 10.1 l-0.8 -0.8 M15.5 4.5 l-0.8 0.8" stroke="#1d3d82" stroke-width="0.9"/><path d="M8.6 3.6 L13.6 8.6" stroke="#1d3d82" stroke-width="2.4"/><path d="M9.2 4.2 L13 8" stroke="#f7e58c" stroke-width="0.9" stroke-dasharray="0.8 0.6"/><circle cx="7.8" cy="2.8" r="0.7" fill="#1d2a5a"/></svg>
<div class="t" style="left:264.00px;top:512px;color:#000;font-size:12px;line-height:12px;font-weight:normal;transform:scaleX(1.0323);">Architecture</div>
<svg style="position:absolute;left:241px;top:526px" width="20" height="20" viewBox="0 0 20 20"><path d="M3.5 17.5 V9 Q3.5 7 5.5 7 H7.5 L8.5 12.5 L4 17.5 Z" fill="#fae6b4" stroke="#c9831f" stroke-width="1"/><path d="M8.5 12.5 H18.5 L14.5 17.5 H3.8 Z" fill="#f6d07a" stroke="#c9831f" stroke-width="1" stroke-linejoin="round"/><path d="M6 15.6 L9 13.3 L16.8 13.3" stroke="#fbe6b0" stroke-width="0.8" fill="none"/><circle cx="12.7" cy="7.3" r="4.6" fill="#fbfdff" stroke="#3f8ad4" stroke-width="1"/><path d="M12.7 3.2 V4.4 M16.8 7.3 H15.6 M12.7 11.4 V10.2 M9.9 10.1 l0.8 -0.8 M15.5 10.1 l-0.8 -0.8 M15.5 4.5 l-0.8 0.8" stroke="#1d3d82" stroke-width="0.9"/><path d="M8.6 3.6 L13.6 8.6" stroke="#1d3d82" stroke-width="2.4"/><path d="M9.2 4.2 L13 8" stroke="#f7e58c" stroke-width="0.9" stroke-dasharray="0.8 0.6"/><circle cx="7.8" cy="2.8" r="0.7" fill="#1d2a5a"/></svg>
<div class="t" style="left:264.00px;top:530px;color:#000;font-size:12px;line-height:12px;font-weight:normal;transform:scaleX(0.9623);">TrustZone</div>
<svg style="position:absolute;left:213px;top:551px" width="11" height="8" viewBox="0 0 11 8"><path d="M1.5 1.5 L5.5 5.5 L9.5 1.5" fill="none" stroke="#404040" stroke-width="1.6"/></svg>
<svg style="position:absolute;left:229px;top:548px" width="13" height="13" viewBox="0 0 13 13"><circle cx="6.5" cy="6.5" r="6" fill="#f2f7fd" stroke="#3f8ad4" stroke-width="1.1"/><path d="M6.5 0.8 V2.8 M12.2 6.5 H10.2 M6.5 12.2 V10.2 M0.8 6.5 H2.8 M2.7800000000000002 10.219999999999999 l1.3 -1.3 M10.219999999999999 10.219999999999999 l-1.3 -1.3 M10.219999999999999 2.7800000000000002 l-1.3 1.3" stroke="#1d3d82" stroke-width="1"/><path d="M1.6 1.6 L8 8" stroke="#1d3d82" stroke-width="3.3"/><path d="M2.5 2.5 L7.2 7.2" stroke="#f7e58c" stroke-width="1.1" stroke-dasharray="0.8 0.6"/><circle cx="0.8" cy="0.8" r="0.8" fill="#1d2a5a"/></svg>
<div class="t" style="left:248.01px;top:548px;color:#000;font-size:12px;line-height:12px;font-weight:normal;transform:scaleX(0.9881);">MCU Assembler</div>
<svg style="position:absolute;left:241px;top:562px" width="20" height="20" viewBox="0 0 20 20"><path d="M3.5 17.5 V9 Q3.5 7 5.5 7 H7.5 L8.5 12.5 L4 17.5 Z" fill="#fae6b4" stroke="#c9831f" stroke-width="1"/><path d="M8.5 12.5 H18.5 L14.5 17.5 H3.8 Z" fill="#f6d07a" stroke="#c9831f" stroke-width="1" stroke-linejoin="round"/><path d="M6 15.6 L9 13.3 L16.8 13.3" stroke="#fbe6b0" stroke-width="0.8" fill="none"/><circle cx="12.7" cy="7.3" r="4.6" fill="#fbfdff" stroke="#3f8ad4" stroke-width="1"/><path d="M12.7 3.2 V4.4 M16.8 7.3 H15.6 M12.7 11.4 V10.2 M9.9 10.1 l0.8 -0.8 M15.5 10.1 l-0.8 -0.8 M15.5 4.5 l-0.8 0.8" stroke="#1d3d82" stroke-width="0.9"/><path d="M8.6 3.6 L13.6 8.6" stroke="#1d3d82" stroke-width="2.4"/><path d="M9.2 4.2 L13 8" stroke="#f7e58c" stroke-width="0.9" stroke-dasharray="0.8 0.6"/><circle cx="7.8" cy="2.8" r="0.7" fill="#1d2a5a"/></svg>
<div class="t" style="left:264.05px;top:566px;color:#000;font-size:12px;line-height:12px;font-weight:normal;transform:scaleX(0.9500);">General</div>
<svg style="position:absolute;left:241px;top:580px" width="20" height="20" viewBox="0 0 20 20"><path d="M3.5 17.5 V9 Q3.5 7 5.5 7 H7.5 L8.5 12.5 L4 17.5 Z" fill="#fae6b4" stroke="#c9831f" stroke-width="1"/><path d="M8.5 12.5 H18.5 L14.5 17.5 H3.8 Z" fill="#f6d07a" stroke="#c9831f" stroke-width="1" stroke-linejoin="round"/><path d="M6 15.6 L9 13.3 L16.8 13.3" stroke="#fbe6b0" stroke-width="0.8" fill="none"/><circle cx="12.7" cy="7.3" r="4.6" fill="#fbfdff" stroke="#3f8ad4" stroke-width="1"/><path d="M12.7 3.2 V4.4 M16.8 7.3 H15.6 M12.7 11.4 V10.2 M9.9 10.1 l0.8 -0.8 M15.5 10.1 l-0.8 -0.8 M15.5 4.5 l-0.8 0.8" stroke="#1d3d82" stroke-width="0.9"/><path d="M8.6 3.6 L13.6 8.6" stroke="#1d3d82" stroke-width="2.4"/><path d="M9.2 4.2 L13 8" stroke="#f7e58c" stroke-width="0.9" stroke-dasharray="0.8 0.6"/><circle cx="7.8" cy="2.8" r="0.7" fill="#1d2a5a"/></svg>
<div class="t" style="left:264.00px;top:584px;color:#000;font-size:12px;line-height:12px;font-weight:normal;transform:scaleX(1.0082);">Architecture &amp; Headers</div>
<svg style="position:absolute;left:213px;top:605px" width="11" height="8" viewBox="0 0 11 8"><path d="M1.5 1.5 L5.5 5.5 L9.5 1.5" fill="none" stroke="#404040" stroke-width="1.6"/></svg>
<svg style="position:absolute;left:229px;top:602px" width="13" height="13" viewBox="0 0 13 13"><circle cx="6.5" cy="6.5" r="6" fill="#f2f7fd" stroke="#3f8ad4" stroke-width="1.1"/><path d="M6.5 0.8 V2.8 M12.2 6.5 H10.2 M6.5 12.2 V10.2 M0.8 6.5 H2.8 M2.7800000000000002 10.219999999999999 l1.3 -1.3 M10.219999999999999 10.219999999999999 l-1.3 -1.3 M10.219999999999999 2.7800000000000002 l-1.3 1.3" stroke="#1d3d82" stroke-width="1"/><path d="M1.6 1.6 L8 8" stroke="#1d3d82" stroke-width="3.3"/><path d="M2.5 2.5 L7.2 7.2" stroke="#f7e58c" stroke-width="1.1" stroke-dasharray="0.8 0.6"/><circle cx="0.8" cy="0.8" r="0.8" fill="#1d2a5a"/></svg>
<div class="t" style="left:248.00px;top:602px;color:#000;font-size:12px;line-height:12px;font-weight:normal;">MCU C++ Linker</div>
<svg style="position:absolute;left:241px;top:616px" width="20" height="20" viewBox="0 0 20 20"><path d="M3.5 17.5 V9 Q3.5 7 5.5 7 H7.5 L8.5 12.5 L4 17.5 Z" fill="#fae6b4" stroke="#c9831f" stroke-width="1"/><path d="M8.5 12.5 H18.5 L14.5 17.5 H3.8 Z" fill="#f6d07a" stroke="#c9831f" stroke-width="1" stroke-linejoin="round"/><path d="M6 15.6 L9 13.3 L16.8 13.3" stroke="#fbe6b0" stroke-width="0.8" fill="none"/><circle cx="12.7" cy="7.3" r="4.6" fill="#fbfdff" stroke="#3f8ad4" stroke-width="1"/><path d="M12.7 3.2 V4.4 M16.8 7.3 H15.6 M12.7 11.4 V10.2 M9.9 10.1 l0.8 -0.8 M15.5 10.1 l-0.8 -0.8 M15.5 4.5 l-0.8 0.8" stroke="#1d3d82" stroke-width="0.9"/><path d="M8.6 3.6 L13.6 8.6" stroke="#1d3d82" stroke-width="2.4"/><path d="M9.2 4.2 L13 8" stroke="#f7e58c" stroke-width="0.9" stroke-dasharray="0.8 0.6"/><circle cx="7.8" cy="2.8" r="0.7" fill="#1d2a5a"/></svg>
<div class="t" style="left:264.05px;top:620px;color:#000;font-size:12px;line-height:12px;font-weight:normal;transform:scaleX(0.9500);">General</div>
<svg style="position:absolute;left:241px;top:634px" width="20" height="20" viewBox="0 0 20 20"><path d="M3.5 17.5 V9 Q3.5 7 5.5 7 H7.5 L8.5 12.5 L4 17.5 Z" fill="#fae6b4" stroke="#c9831f" stroke-width="1"/><path d="M8.5 12.5 H18.5 L14.5 17.5 H3.8 Z" fill="#f6d07a" stroke="#c9831f" stroke-width="1" stroke-linejoin="round"/><path d="M6 15.6 L9 13.3 L16.8 13.3" stroke="#fbe6b0" stroke-width="0.8" fill="none"/><circle cx="12.7" cy="7.3" r="4.6" fill="#fbfdff" stroke="#3f8ad4" stroke-width="1"/><path d="M12.7 3.2 V4.4 M16.8 7.3 H15.6 M12.7 11.4 V10.2 M9.9 10.1 l0.8 -0.8 M15.5 10.1 l-0.8 -0.8 M15.5 4.5 l-0.8 0.8" stroke="#1d3d82" stroke-width="0.9"/><path d="M8.6 3.6 L13.6 8.6" stroke="#1d3d82" stroke-width="2.4"/><path d="M9.2 4.2 L13 8" stroke="#f7e58c" stroke-width="0.9" stroke-dasharray="0.8 0.6"/><circle cx="7.8" cy="2.8" r="0.7" fill="#1d2a5a"/></svg>
<div class="t" style="left:264.02px;top:638px;color:#000;font-size:12px;line-height:12px;font-weight:normal;transform:scaleX(0.9767);">Libraries</div>
<svg style="position:absolute;left:241px;top:652px" width="20" height="20" viewBox="0 0 20 20"><path d="M3.5 17.5 V9 Q3.5 7 5.5 7 H7.5 L8.5 12.5 L4 17.5 Z" fill="#fae6b4" stroke="#c9831f" stroke-width="1"/><path d="M8.5 12.5 H18.5 L14.5 17.5 H3.8 Z" fill="#f6d07a" stroke="#c9831f" stroke-width="1" stroke-linejoin="round"/><path d="M6 15.6 L9 13.3 L16.8 13.3" stroke="#fbe6b0" stroke-width="0.8" fill="none"/><circle cx="12.7" cy="7.3" r="4.6" fill="#fbfdff" stroke="#3f8ad4" stroke-width="1"/><path d="M12.7 3.2 V4.4 M16.8 7.3 H15.6 M12.7 11.4 V10.2 M9.9 10.1 l0.8 -0.8 M15.5 10.1 l-0.8 -0.8 M15.5 4.5 l-0.8 0.8" stroke="#1d3d82" stroke-width="0.9"/><path d="M8.6 3.6 L13.6 8.6" stroke="#1d3d82" stroke-width="2.4"/><path d="M9.2 4.2 L13 8" stroke="#f7e58c" stroke-width="0.9" stroke-dasharray="0.8 0.6"/><circle cx="7.8" cy="2.8" r="0.7" fill="#1d2a5a"/></svg>
<div class="t" style="left:264.00px;top:656px;color:#000;font-size:12px;line-height:12px;font-weight:normal;">Miscellaneous</div>
<svg style="position:absolute;left:241px;top:670px" width="20" height="20" viewBox="0 0 20 20"><path d="M3.5 17.5 V9 Q3.5 7 5.5 7 H7.5 L8.5 12.5 L4 17.5 Z" fill="#fae6b4" stroke="#c9831f" stroke-width="1"/><path d="M8.5 12.5 H18.5 L14.5 17.5 H3.8 Z" fill="#f6d07a" stroke="#c9831f" stroke-width="1" stroke-linejoin="round"/><path d="M6 15.6 L9 13.3 L16.8 13.3" stroke="#fbe6b0" stroke-width="0.8" fill="none"/><circle cx="12.7" cy="7.3" r="4.6" fill="#fbfdff" stroke="#3f8ad4" stroke-width="1"/><path d="M12.7 3.2 V4.4 M16.8 7.3 H15.6 M12.7 11.4 V10.2 M9.9 10.1 l0.8 -0.8 M15.5 10.1 l-0.8 -0.8 M15.5 4.5 l-0.8 0.8" stroke="#1d3d82" stroke-width="0.9"/><path d="M8.6 3.6 L13.6 8.6" stroke="#1d3d82" stroke-width="2.4"/><path d="M9.2 4.2 L13 8" stroke="#f7e58c" stroke-width="0.9" stroke-dasharray="0.8 0.6"/><circle cx="7.8" cy="2.8" r="0.7" fill="#1d2a5a"/></svg>
<div style="position:absolute;left:412px;top:185px;width:13px;height:13px;border:1px solid #333;box-sizing:border-box;background:#fff"></div>
<div class="t" style="left:428.00px;top:186px;color:#000;font-size:12px;line-height:12px;font-weight:normal;">Do not search system directories (-nostdinc)</div>
<div style="position:absolute;left:412px;top:206px;width:13px;height:13px;border:1px solid #333;box-sizing:border-box;background:#fff"></div>
<div class="t" style="left:428.03px;top:207px;color:#000;font-size:12px;line-height:12px;font-weight:normal;transform:scaleX(0.9717);">Preprocess only (-E)</div>
<div style="position:absolute;left:412px;top:226px;width:382px;height:30px;border:1px solid #a0a0a0;border-bottom:none;box-sizing:border-box;background:#f0f0f0;box-shadow:inset 1px 1px 0 #fff, inset -1px 0 0 #fff"></div>
<div style="position:absolute;left:413px;top:253px;width:380px;height:1px;background:#fff"></div>
<div class="t" style="left:420.00px;top:233px;color:#000;font-size:12px;line-height:12px;font-weight:normal;">Defined symbols (-D)</div>
<div style="position:absolute;left:412px;top:254px;width:382px;height:1px;background:#b9bdc4"></div>
<div style="position:absolute;left:412px;top:255px;width:382px;height:281px;border:1px solid #858b94;box-sizing:border-box;background:#fff"></div>
<div class="t" style="left:416.09px;top:259px;color:#000;font-size:12px;line-height:12px;font-weight:normal;transform:scaleX(0.9065);">CPU<span class=u>_</span>MIMXRT798SGFOA</div>
<div style="position:absolute;left:414px;top:272px;width:378px;height:15px;background:#0078d7"></div>
<div class="t" style="left:416.10px;top:274px;color:#fff;font-size:12px;line-height:12px;font-weight:normal;transform:scaleX(0.8954);">PRINTF<span class=u>_</span>FLOAT<span class=u>_</span>ENABLE=1</div>
<div class="t" style="left:416.09px;top:289px;color:#000;font-size:12px;line-height:12px;font-weight:normal;transform:scaleX(0.9143);">CPU<span class=u>_</span>MIMXRT798SGFOA<span class=u>_</span>cm33</div>
<div class="t" style="left:416.08px;top:304px;color:#000;font-size:12px;line-height:12px;font-weight:normal;transform:scaleX(0.9194);">CPU<span class=u>_</span>MIMXRT798SGFOA<span class=u>_</span>cm33<span class=u>_</span>core0</div>
<div class="t" style="left:416.13px;top:319px;color:#000;font-size:12px;line-height:12px;font-weight:normal;transform:scaleX(0.8684);">MCUXPRESSO<span class=u>_</span>SDK</div>
<div class="t" style="left:416.12px;top:334px;color:#000;font-size:12px;line-height:12px;font-weight:normal;transform:scaleX(0.8765);">SDK<span class=u>_</span>DEBUGCONSOLE<span class=u>_</span>UART</div>
<div class="t" style="left:416.00px;top:349px;color:#000;font-size:12px;line-height:12px;font-weight:normal;transform:scaleX(0.9615);">ARM<span class=u>_</span>MATH<span class=u>_</span>CM33</div>
<div class="t" style="left:416.00px;top:364px;color:#000;font-size:12px;line-height:12px;font-weight:normal;transform:scaleX(0.8407);"><span class=u>_</span><span class=u>_</span>FPU<span class=u>_</span>PRESENT=1</div>
<div class="t" style="left:416.10px;top:379px;color:#000;font-size:12px;line-height:12px;font-weight:normal;transform:scaleX(0.9006);">PRINTF<span class=u>_</span>ADVANCED<span class=u>_</span>ENABLE=1</div>
<div class="t" style="left:416.12px;top:394px;color:#000;font-size:12px;line-height:12px;font-weight:normal;transform:scaleX(0.8819);">SDK<span class=u>_</span>DEBUGCONSOLE=1</div>
<div class="t" style="left:416.08px;top:409px;color:#000;font-size:12px;line-height:12px;font-weight:normal;transform:scaleX(0.9211);">MCUX<span class=u>_</span>META<span class=u>_</span>BUILD</div>
<div class="t" style="left:416.12px;top:424px;color:#000;font-size:12px;line-height:12px;font-weight:normal;transform:scaleX(0.8846);">BOOT<span class=u>_</span>HEADER<span class=u>_</span>ENABLE=1</div>
<div class="t" style="left:416.09px;top:439px;color:#000;font-size:12px;line-height:12px;font-weight:normal;transform:scaleX(0.9060);">NO<span class=u>_</span>HEAP<span class=u>_</span>USAGE=1</div>
<div class="t" style="left:416.00px;top:454px;color:#000;font-size:12px;line-height:12px;font-weight:normal;transform:scaleX(0.8660);"><span class=u>_</span><span class=u>_</span>MCUXPRESSO</div>
<div class="t" style="left:416.00px;top:469px;color:#000;font-size:12px;line-height:12px;font-weight:normal;transform:scaleX(0.8395);"><span class=u>_</span><span class=u>_</span>USE<span class=u>_</span>CMSIS</div>
<div class="t" style="left:416.12px;top:484px;color:#000;font-size:12px;line-height:12px;font-weight:normal;transform:scaleX(0.8750);">DEBUG</div>
<div class="t" style="left:416.00px;top:499px;color:#000;font-size:12px;line-height:12px;font-weight:normal;transform:scaleX(0.8472);"><span class=u>_</span><span class=u>_</span>NEWLIB<span class=u>_</span><span class=u>_</span></div>
<div style="position:absolute;left:412px;top:541px;width:382px;height:30px;border:1px solid #a0a0a0;border-bottom:none;box-sizing:border-box;background:#f0f0f0;box-shadow:inset 1px 1px 0 #fff, inset -1px 0 0 #fff"></div>
<div style="position:absolute;left:413px;top:568px;width:380px;height:1px;background:#fff"></div>
<div class="t" style="left:419.99px;top:548px;color:#000;font-size:12px;line-height:12px;font-weight:normal;transform:scaleX(1.0081);">Undefined symbols (-U)</div>
<div style="position:absolute;left:412px;top:569px;width:382px;height:1px;background:#b9bdc4"></div>
<div style="position:absolute;left:412px;top:570px;width:382px;height:131px;border:1px solid #858b94;box-sizing:border-box;background:#fff"></div>
<svg style="position:absolute;left:678px;top:229px" width="20" height="20" viewBox="0 0 20 20"><path d="M6.5 3.5 H13 L16.5 7 V16.5 H6.5 Z" fill="#f3f7fd" stroke="#b8983a" stroke-width="1"/><path d="M13 3.5 V7 H16.5" fill="#e9cd74" stroke="#b8983a" stroke-width="0.8"/><path d="M8 6.5 H12 M11 8.5 H15 M11 10.5 H15 M11 12.5 H15 M8 14.5 H13" stroke="#6f8fc6" stroke-width="1"/><path d="M6.5 7 V14 M3 10.5 H10" stroke="#16702a" stroke-width="3.4"/><path d="M6.5 8 V13 M4 10.5 H9" stroke="#c8df5a" stroke-width="1.2"/></svg>
<svg style="position:absolute;left:701px;top:229px" width="20" height="20" viewBox="0 0 20 20"><path d="M6.5 3.5 H13 L16.5 7 V16.5 H6.5 Z" fill="#f3f7fd" stroke="#b8983a" stroke-width="1"/><path d="M13 3.5 V7 H16.5" fill="#e9cd74" stroke="#b8983a" stroke-width="0.8"/><path d="M8 6.5 H12 M11 8.5 H15 M11 10.5 H15 M11 12.5 H15 M8 14.5 H13" stroke="#6f8fc6" stroke-width="1"/><path d="M4 9 L9 14 M9 9 L4 14" stroke="#e0223a" stroke-width="3"/><path d="M4.5 9.5 L8.5 13.5 M8.5 9.5 L4.5 13.5" stroke="#f07080" stroke-width="0.8" stroke-dasharray="0.8 0.8"/></svg>
<svg style="position:absolute;left:724px;top:229px" width="20" height="20" viewBox="0 0 20 20"><path d="M6.5 3.5 H13 L16.5 7 V16.5 H6.5 Z" fill="#f3f7fd" stroke="#b8983a" stroke-width="1"/><path d="M13 3.5 V7 H16.5" fill="#e9cd74" stroke="#b8983a" stroke-width="0.8"/><path d="M8 6.5 H12 M11 8.5 H15 M11 10.5 H15 M11 12.5 H15 M8 14.5 H13" stroke="#6f8fc6" stroke-width="1"/><path d="M4.8 6.8 L10.6 12.6" stroke="#8a6a30" stroke-width="3.6"/><path d="M4.8 6.8 L10.6 12.6" stroke="#f6d890" stroke-width="2"/><path d="M10 12 L12 14" stroke="#12306a" stroke-width="2.6"/></svg>
<svg style="position:absolute;left:747px;top:229px" width="20" height="20" viewBox="0 0 20 20"><path d="M4.5 3 V6.5 M16.5 3 V15" stroke="#a8a878" stroke-width="1"/><rect x="5" y="3" width="11" height="12" fill="#eef3fb"/><path d="M6 4.5 H9" stroke="#2a5e9c" stroke-width="1.2"/><path d="M10 4.5 H15 M10 6.5 H11 M13 6.5 H15 M12 8.5 H15 M13 10.5 H15 M13 12.5 H15 M11 14.5 H15" stroke="#b4c2dc" stroke-width="1"/><path d="M7.5 6 L12 10.5 H9.8 V17.5 H5.2 V10.5 H3 Z" fill="#fbe08a" stroke="#d08a12" stroke-width="1" stroke-linejoin="round"/><path d="M6.5 11 V16.5" stroke="#fff4c8" stroke-width="1"/></svg>
<svg style="position:absolute;left:770px;top:229px" width="20" height="20" viewBox="0 0 20 20"><path d="M4.5 14 V18 M16.5 6 V18" stroke="#a8a878" stroke-width="1"/><rect x="5" y="6" width="11" height="12" fill="#eef3fb"/><path d="M6 16.5 H9" stroke="#2a5e9c" stroke-width="1.2"/><path d="M11 6.5 H15 M13 8.5 H15 M13 10.5 H15 M12 12.5 H15 M10 14.5 H11 M13 14.5 H15 M10 16.5 H15" stroke="#b4c2dc" stroke-width="1"/><path d="M5.2 3 H9.8 V10 H12 L7.5 15 L3 10 H5.2 Z" fill="#fbe08a" stroke="#d08a12" stroke-width="1" stroke-linejoin="round"/><path d="M6.5 4 V9.5" stroke="#fff4c8" stroke-width="1"/></svg>
<svg style="position:absolute;left:678px;top:544px" width="20" height="20" viewBox="0 0 20 20"><path d="M6.5 3.5 H13 L16.5 7 V16.5 H6.5 Z" fill="#f3f7fd" stroke="#b8983a" stroke-width="1"/><path d="M13 3.5 V7 H16.5" fill="#e9cd74" stroke="#b8983a" stroke-width="0.8"/><path d="M8 6.5 H12 M11 8.5 H15 M11 10.5 H15 M11 12.5 H15 M8 14.5 H13" stroke="#6f8fc6" stroke-width="1"/><path d="M6.5 7 V14 M3 10.5 H10" stroke="#16702a" stroke-width="3.4"/><path d="M6.5 8 V13 M4 10.5 H9" stroke="#c8df5a" stroke-width="1.2"/></svg>
<svg style="position:absolute;left:701px;top:544px" width="20" height="20" viewBox="0 0 20 20"><path d="M6.5 3.5 H13 L16.5 7 V16.5 H9" fill="none" stroke="#a6a6a6" stroke-width="1"/><path d="M13 3.5 V7 H16.5" fill="none" stroke="#a6a6a6" stroke-width="0.8"/><path d="M8 6.5 H12 M11 14.5 H13" stroke="#b0b0b0"/><path d="M4 9.5 L9 14.5 M9 9.5 L4 14.5" stroke="#8c8c8c" stroke-width="2.6"/></svg>
<svg style="position:absolute;left:724px;top:544px" width="20" height="20" viewBox="0 0 20 20"><path d="M6.5 3.5 H13 L16.5 7 V16.5 H6.5 Z" fill="none" stroke="#a6a6a6" stroke-width="1"/><path d="M13 3.5 V7 H16.5" fill="none" stroke="#a6a6a6" stroke-width="0.8"/><path d="M8 6.5 H12 M11 8.5 H15 M11 10.5 H15 M11 12.5 H15" stroke="#b4b4b4" stroke-width="1"/><path d="M4.8 6.8 L10.6 12.6" stroke="#9a9a9a" stroke-width="2.8"/><path d="M4.8 6.8 L10.6 12.6" stroke="#e8e8e8" stroke-width="1.2"/><path d="M10 12 L12 14" stroke="#8a8a8a" stroke-width="2"/></svg>
<svg style="position:absolute;left:747px;top:544px" width="20" height="20" viewBox="0 0 20 20"><path d="M5.5 3 V5 M16.5 3 V12 M7 4.5 H9" stroke="#a0a0a0" stroke-width="1"/><path d="M7.5 6.5 L11.5 10.5 H9.5 V17.5 H5.5 V10.5 H3.5 Z" fill="none" stroke="#a0a0a0" stroke-width="1" stroke-linejoin="round"/></svg>
<svg style="position:absolute;left:770px;top:544px" width="20" height="20" viewBox="0 0 20 20"><path d="M5.5 15 V17 M16.5 6 V16 M7 16.5 H9" stroke="#a0a0a0" stroke-width="1"/><path d="M5.5 3 H9.5 V10 H11.5 L7.5 14 L3.5 10 H5.5 Z" fill="none" stroke="#a0a0a0" stroke-width="1" stroke-linejoin="round"/></svg>
</body></html>
